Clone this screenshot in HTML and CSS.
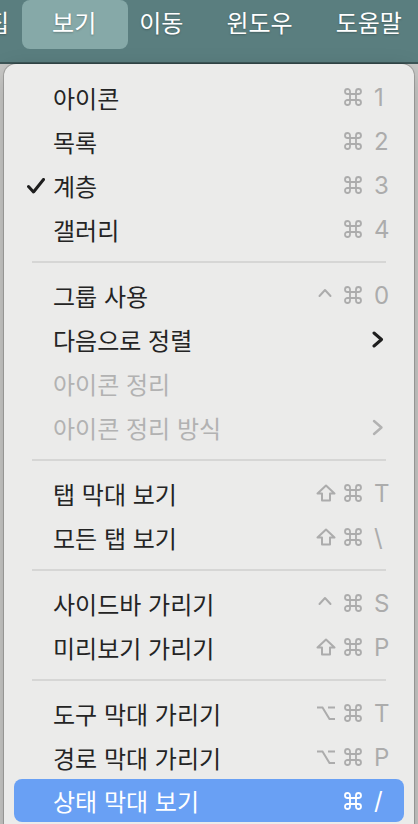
FILE: index.html
```html
<!DOCTYPE html>
<html lang="ko">
<head>
  <meta charset="UTF-8" />
  <meta name="viewport" content="width=device-width, initial-scale=1.0" />
  <title>보기 메뉴</title>
  <link rel="stylesheet" href="styles.css">
</head>
<body>
  <svg width="0" height="0" class="defs">
    <defs>
      <symbol id="cmd" viewBox="0 0 18 18">
        <path d="M6 6V3.5A2.5 2.5 0 1 0 3.5 6H14.5A2.5 2.5 0 1 0 12 3.5V14.5A2.5 2.5 0 1 0 14.5 12H3.5A2.5 2.5 0 1 0 6 14.5Z" fill="none" stroke="currentColor" stroke-width="1.8"/>
      </symbol>
      <symbol id="shift" viewBox="0 0 20 18">
        <polygon points="10,1.5 18.5,9.5 14,9.5 14,16.5 6,16.5 6,9.5 1.5,9.5" fill="none" stroke="currentColor" stroke-width="2" stroke-linejoin="round"/>
      </symbol>
      <symbol id="ctrl" viewBox="0 0 14 18">
        <polyline points="1.5,10 7,4 12.5,10" fill="none" stroke="currentColor" stroke-width="2" stroke-linecap="round" stroke-linejoin="round"/>
      </symbol>
      <symbol id="opt" viewBox="0 0 20 18">
        <path d="M1 3.5H6.5L13.5 15H19M12 3.5H19" fill="none" stroke="currentColor" stroke-width="2"/>
      </symbol>
    </defs>
  </svg>

  <div class="menubar">
    <span class="bar-item first">집</span>
    <span class="bar-item active">보기</span>
    <span class="bar-item">이동</span>
    <span class="bar-item">윈도우</span>
    <span class="bar-item">도움말</span>
  </div>

  <div class="menu">
    <div class="row"><span class="check"></span><span class="label">아이콘</span><span class="keys"><svg class="cmd"><use href="#cmd"/></svg><span class="key">1</span></span></div>
    <div class="row"><span class="check"></span><span class="label">목록</span><span class="keys"><svg class="cmd"><use href="#cmd"/></svg><span class="key">2</span></span></div>
    <div class="row">
      <span class="check"><svg width="18" height="16" viewBox="0 0 18 16"><polyline points="1.5,8.5 6.5,14 16.5,1.5" fill="none" stroke="#1e1e1e" stroke-width="3" stroke-linecap="round" stroke-linejoin="round"/></svg></span>
      <span class="label">계층</span><span class="keys"><svg class="cmd"><use href="#cmd"/></svg><span class="key">3</span></span>
    </div>
    <div class="row"><span class="check"></span><span class="label">갤러리</span><span class="keys"><svg class="cmd"><use href="#cmd"/></svg><span class="key">4</span></span></div>

    <div class="sep"></div>

    <div class="row"><span class="check"></span><span class="label">그룹 사용</span><span class="keys"><svg class="mod ctrl"><use href="#ctrl"/></svg><svg class="cmd"><use href="#cmd"/></svg><span class="key">0</span></span></div>
    <div class="row">
      <span class="check"></span><span class="label">다음으로 정렬</span>
      <span class="arrow"><svg width="12" height="17" viewBox="0 0 12 17"><polyline points="2,2 9.5,8.5 2,15" fill="none" stroke="#1e1e1e" stroke-width="3" stroke-linecap="round" stroke-linejoin="round"/></svg></span>
    </div>
    <div class="row off"><span class="check"></span><span class="label">아이콘 정리</span></div>
    <div class="row off">
      <span class="check"></span><span class="label">아이콘 정리 방식</span>
      <span class="arrow"><svg width="12" height="17" viewBox="0 0 12 17"><polyline points="2,2 9.5,8.5 2,15" fill="none" stroke="#b2b2b2" stroke-width="2.4" stroke-linecap="round" stroke-linejoin="round"/></svg></span>
    </div>

    <div class="sep"></div>

    <div class="row"><span class="check"></span><span class="label">탭 막대 보기</span><span class="keys"><svg class="mod wide"><use href="#shift"/></svg><svg class="cmd"><use href="#cmd"/></svg><span class="key">T</span></span></div>
    <div class="row"><span class="check"></span><span class="label">모든 탭 보기</span><span class="keys"><svg class="mod wide"><use href="#shift"/></svg><svg class="cmd"><use href="#cmd"/></svg><span class="key">\</span></span></div>

    <div class="sep"></div>

    <div class="row"><span class="check"></span><span class="label">사이드바 가리기</span><span class="keys"><svg class="mod ctrl"><use href="#ctrl"/></svg><svg class="cmd"><use href="#cmd"/></svg><span class="key">S</span></span></div>
    <div class="row"><span class="check"></span><span class="label">미리보기 가리기</span><span class="keys"><svg class="mod wide"><use href="#shift"/></svg><svg class="cmd"><use href="#cmd"/></svg><span class="key">P</span></span></div>

    <div class="sep"></div>

    <div class="row"><span class="check"></span><span class="label">도구 막대 가리기</span><span class="keys"><svg class="mod wide"><use href="#opt"/></svg><svg class="cmd"><use href="#cmd"/></svg><span class="key">T</span></span></div>
    <div class="row"><span class="check"></span><span class="label">경로 막대 가리기</span><span class="keys"><svg class="mod wide"><use href="#opt"/></svg><svg class="cmd"><use href="#cmd"/></svg><span class="key">P</span></span></div>
    <div class="row hover"><span class="check"></span><span class="label">상태 막대 보기</span><span class="keys"><svg class="cmd"><use href="#cmd"/></svg><span class="key">/</span></span></div>
  </div>
</body>
</html>
```

FILE: styles.css
```css
body {
  margin: 0;
  background: #c9c9c7;
  font-family: "Inter", "Noto Sans CJK KR", sans-serif;
  overflow: hidden;
  height: 824px;
}
.defs {
  position: absolute;
}
.menubar {
  height: 62px;
  background: #5a7e7f;
  border-bottom: 2px solid #3d5657;
  display: flex;
  gap: 43px;
  align-items: flex-start;
  white-space: nowrap;
}
.bar-item {
  position: relative;
  height: 49px;
  line-height: 48px;
  font-size: 24px;
  color: #fff;
  text-shadow: 0 1px 2px rgba(0,0,0,0.25);
}
.bar-item.first {
  margin-left: -13px;
}
.bar-item.active {
  z-index: 0;
}
.bar-item.active::before {
  content: "";
  position: absolute;
  top: 0;
  bottom: 0;
  left: -30px;
  right: -32px;
  background: #86a9a8;
  border-radius: 8px;
  z-index: -1;
}
.menu {
  margin-left: 4px;
  width: 410px;
  box-sizing: border-box;
  height: 780px;
  padding: 11px 10px 0;
  background: #ebebea;
  border-radius: 12px 12px 0 0;
  box-shadow: 0 0 0 1px rgba(0,0,0,0.18), 0 8px 24px rgba(0,0,0,0.2);
}
.row {
  display: flex;
  align-items: center;
  height: 44px;
  padding: 0 16px 0 13px;
  border-radius: 8px;
  font-size: 24px;
  color: #242424;
}
.check {
  width: 26px;
  display: flex;
  align-items: center;
  padding-top: 1px;
}
.label {
  flex: 1;
}
.row.off .label {
  color: #b2b2b2;
}
.keys {
  display: flex;
  align-items: center;
  color: #acacac;
}
.mod {
  height: 18px;
}
.mod.ctrl {
  width: 14px;
  margin-right: 12px;
}
.mod.wide {
  width: 20px;
  margin-right: 8px;
}
.cmd {
  width: 18px;
  height: 18px;
  margin-right: 12px;
}
.key {
  width: 14px;
  font-size: 24px;
}
.arrow {
  display: flex;
  margin-right: 4px;
}
.row.hover {
  background: #69a0f4;
  color: #fff;
  height: 43px;
}
.row.hover .keys {
  color: #fff;
}
.sep {
  height: 2px;
  margin: 10px 18px;
  background: #d6d6d5;
}
```
